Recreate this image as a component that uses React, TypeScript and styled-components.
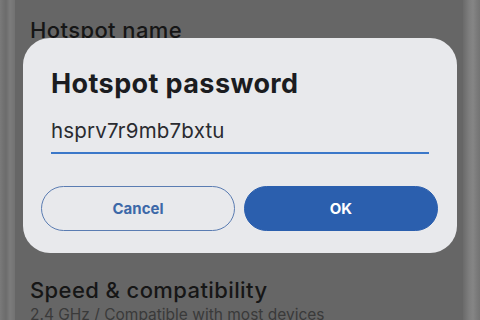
import React from "react";
import styled, { createGlobalStyle } from "styled-components";

const Global = createGlobalStyle`
  html, body { margin: 0; padding: 0; }
  body { width: 480px; height: 320px; overflow: hidden; background: #666666; font-family: Inter, "Open Sans", sans-serif; }
`;

const Screen = styled.div`
  position: relative;
  width: 480px;
  height: 320px;
  display: grid;
  grid-template-columns: 15px 1fr 17px;
  background: #666666;
  overflow: hidden;
`;

const Edge = styled.div<{ $side: "left" | "right" }>`
  background: ${(p) =>
    p.$side === "left"
      ? "linear-gradient(90deg, #7a7a7a 0px, #727272 3px, #6c6c6c 6px, #7c7c7c 10px, #727272 15px)"
      : "linear-gradient(90deg, #6a6a6a 0px, #7e7e7e 6px, #858585 10px, #7a7a7a 14px, #737373 17px)"};
`;

const Content = styled.div`
  display: flex;
  flex-direction: column;
  padding: 16px 0 0 15px;
`;

const SettingTitle = styled.div`
  font-family: Inter, sans-serif;
  font-size: 22px;
  font-weight: 500;
  letter-spacing: 0.4px;
  color: #161616;
  line-height: 28px;
`;

const SettingSub = styled.div`
  font-family: Inter, sans-serif;
  font-size: 15.5px;
  color: #3a3a3a;
  line-height: 22px;
`;

const Spacer = styled.div`
  height: 232px;
`;

const Dialog = styled.div`
  position: absolute;
  left: 23px;
  top: 38px;
  width: 434px;
  height: 215px;
  box-sizing: border-box;
  background: #e8e9ec;
  border-radius: 27px;
  padding: 28px 19px 0 18px;
  display: flex;
  flex-direction: column;
`;

const DialogTitle = styled.div`
  font-family: Inter, sans-serif;
  font-size: 27px;
  font-weight: 700;
  color: #1b1c20;
  line-height: 36px;
  padding-left: 10px;
  letter-spacing: 0.4px;
`;

const Field = styled.div`
  margin: 16px 9px 0 10px;
  padding-bottom: 8px;
  border-bottom: 2px solid #3b78c9;
  font-family: Inter, sans-serif;
  font-size: 20.5px;
  letter-spacing: 0.2px;
  color: #2a2b30;
  line-height: 26px;
`;

const Buttons = styled.div`
  display: grid;
  grid-template-columns: 1fr 1fr;
  gap: 9px;
  margin-top: 32px;
`;

const Button = styled.div<{ $primary?: boolean }>`
  height: 45px;
  box-sizing: border-box;
  border-radius: 23px;
  display: flex;
  align-items: center;
  justify-content: center;
  font-family: Inter, sans-serif;
  font-size: 15px;
  font-weight: 700;
  color: ${(p) => (p.$primary ? "#ffffff" : "#3c68a8")};
  background: ${(p) => (p.$primary ? "#2b5fae" : "transparent")};
  border: 1.5px solid ${(p) => (p.$primary ? "#2b5fae" : "#5a7cb2")};
`;

export default function App() {
  return (
    <>
      <Global />
      <Screen>
        <Edge $side="left" />
        <Content>
          <SettingTitle>Hotspot name</SettingTitle>
          <Spacer />
          <SettingTitle>Speed &amp; compatibility</SettingTitle>
          <SettingSub>2.4 GHz / Compatible with most devices</SettingSub>
        </Content>
        <Edge $side="right" />
        <Dialog>
          <DialogTitle>Hotspot password</DialogTitle>
          <Field>hsprv7r9mb7bxtu</Field>
          <Buttons>
            <Button>Cancel</Button>
            <Button $primary>OK</Button>
          </Buttons>
        </Dialog>
      </Screen>
    </>
  );
}
